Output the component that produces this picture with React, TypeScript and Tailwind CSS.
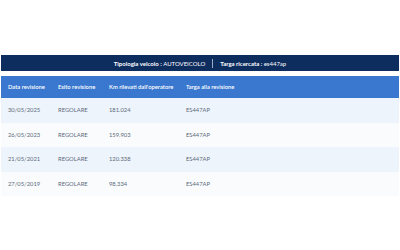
type Revisione = {
  data: string
  esito: string
  km: string
  targa: string
}

const revisioni: Revisione[] = [
  { data: '30/05/2025', esito: 'REGOLARE', km: '181.024', targa: 'ES447AP' },
  { data: '26/05/2023', esito: 'REGOLARE', km: '159.903', targa: 'ES447AP' },
  { data: '21/05/2021', esito: 'REGOLARE', km: '120.338', targa: 'ES447AP' },
  { data: '27/05/2019', esito: 'REGOLARE', km: '98.334', targa: 'ES447AP' },
]

const cols = 'grid grid-cols-[50px_51px_77px_1fr] items-center pl-[7px]'

export default function App() {
  return (
    <div className="h-[250px] w-[400px] bg-white pt-[55px] px-px font-['Lato',sans-serif]">
      <div className="flex h-[16px] items-center justify-center bg-[#0e2d5f] text-[6px] text-white">
        <span className="font-bold">Tipologia veicolo :&nbsp;</span>
        <span>AUTOVEICOLO</span>
        <span className="mx-[7px] h-[9px] w-px bg-white/60" />
        <span className="font-bold">Targa ricercata :&nbsp;</span>
        <span>es447ap</span>
      </div>

      <div className="mt-[5px]">
        <div className={`${cols} h-[22px] bg-[#3a78cf] text-[5.8px] font-semibold text-white`}>
          <span>Data revisione</span>
          <span>Esito revisione</span>
          <span>Km rilevati dall'operatore</span>
          <span>Targa alla revisione</span>
        </div>
        {revisioni.map((r, i) => (
          <div
            key={r.data}
            className={`${cols} text-[5.8px] text-[#5d6b7b] ${i % 2 === 0 ? 'h-[25px] bg-[#eef4fb]' : 'h-[24px] bg-[#f9fbfd]'}`}
          >
            <span>{r.data}</span>
            <span>{r.esito}</span>
            <span>{r.km}</span>
            <span>{r.targa}</span>
          </div>
        ))}
      </div>
    </div>
  )
}
